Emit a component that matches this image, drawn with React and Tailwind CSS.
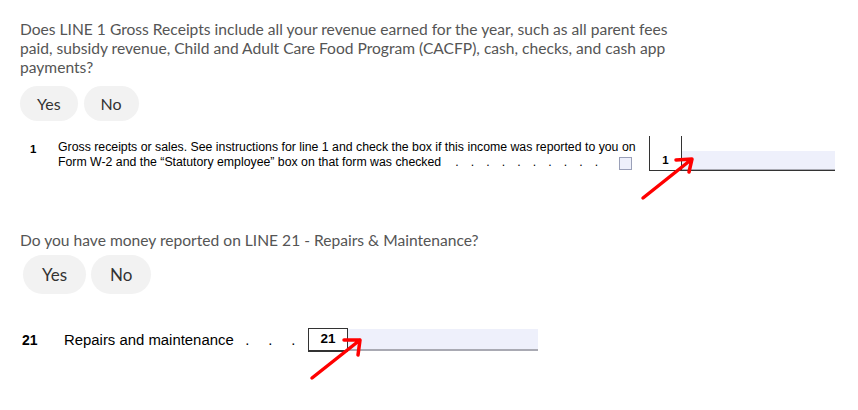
import React from "react";

const sans = { fontFamily: "Lato, 'Open Sans', sans-serif" };

const Question = ({ lines, className = "" }) => (
  <p className={`text-[15.6px] leading-[19px] text-[#555555] ${className}`} style={sans}>
    {lines.map((l, i) => (
      <span key={i} className="block whitespace-nowrap">{l}</span>
    ))}
  </p>
);

const YesNo = ({ className = "", btn = "h-[35px] px-[17px] text-[16px]" }) => (
  <div className={`flex ${className}`} style={sans}>
    <button className={`${btn} rounded-full bg-[#f2f2f2] text-[#333]`}>Yes</button>
    <button className={`${btn} rounded-full bg-[#f2f2f2] text-[#333]`}>No</button>
  </div>
);

const Dots = ({ n, step }) => (
  <span className="flex">
    {Array.from({ length: n }).map((_, i) => (
      <span key={i} className="block text-center" style={{ width: step }}>.</span>
    ))}
  </span>
);

const Arrow = ({ tail, tip, w1, w2 }) => (
  <path
    d={`M${tail[0]} ${tail[1]} L${tip[0]} ${tip[1]} M${w1[0]} ${w1[1]} L${tip[0]} ${tip[1]} L${w2[0]} ${w2[1]}`}
    stroke="#ff0000"
    strokeWidth="3.5"
    strokeLinecap="round"
    strokeLinejoin="round"
    fill="none"
  />
);

export default function App() {
  const form = { fontFamily: "'Liberation Sans', Arial, sans-serif" };

  return (
    <div className="relative w-[858px] h-[410px] bg-white overflow-hidden">
      <div className="px-5 pt-[20px]">
        <Question
          lines={[
            "Does LINE 1 Gross Receipts include all your revenue earned for the year, such as all parent fees",
            "paid, subsidy revenue, Child and Adult Care Food Program (CACFP), cash, checks, and cash app",
            "payments?",
          ]}
        />
        <YesNo className="mt-[9px] gap-[6px]" />

        {/* line 1 */}
        <div className="flex mt-[15px] h-[35px] text-black" style={form}>
          <div className="w-[38px] pl-[10px] pt-[5px] text-[11.5px] font-bold">1</div>
          <div className="w-[591px] pt-[4px] text-[12.3px] leading-[15px]">
            <div className="whitespace-nowrap">Gross receipts or sales. See instructions for line 1 and check the box if this income was reported to you on</div>
            <div className="flex items-center whitespace-nowrap">
              <span>Form W-2 and the “Statutory employee” box on that form was checked</span>
              <span className="ml-[8px]"><Dots n={10} step={15.5} /></span>
              <span className="ml-[15px] mt-[2px] w-[13px] h-[13px] border border-[#9aa0b8] bg-[#eef0fb]" />
            </div>
          </div>
          <div className="flex border-l border-b border-[#333] h-[35px]">
            <div className="w-[32px] border-r border-[#333] flex items-end justify-center pb-[1px] text-[11.5px] font-bold">1</div>
            <div className="w-[153px] self-end h-[19px] bg-[#eef0fb] border-b border-[#a9aab3]" />
          </div>
        </div>

        <Question lines={["Do you have money reported on LINE 21 - Repairs & Maintenance?"]} className="mt-[60px]" />
        <YesNo className="mt-[5px] ml-[3px] gap-[5px]" btn="h-[39px] px-[19px] text-[17px]" />

        {/* line 21 */}
        <div className="flex items-center mt-[34px] text-black" style={form}>
          <div className="w-[44px] pl-[2px] text-[14px] font-bold">21</div>
          <div className="w-[244px] text-[14.9px] flex">
            <span>Repairs and maintenance</span>
            <span className="ml-[2px]"><Dots n={3} step={23} /></span>
          </div>
          <div className="flex h-[24px]">
            <div className="w-[40px] border border-[#333] border-b-2 bg-white flex items-center justify-center text-[13.5px] font-bold">21</div>
            <div className="w-[190px] h-[22px] mt-[1px] bg-[#eef0fb] border-b-2 border-[#a9aab3]" />
          </div>
        </div>
      </div>

      <svg className="absolute inset-0 pointer-events-none" width="858" height="410">
        <Arrow tail={[643, 198]} tip={[692, 159]} w1={[676, 160]} w2={[689, 172]} />
        <Arrow tail={[312, 378]} tip={[360, 340]} w1={[344, 340]} w2={[358, 355]} />
      </svg>
    </div>
  );
}
